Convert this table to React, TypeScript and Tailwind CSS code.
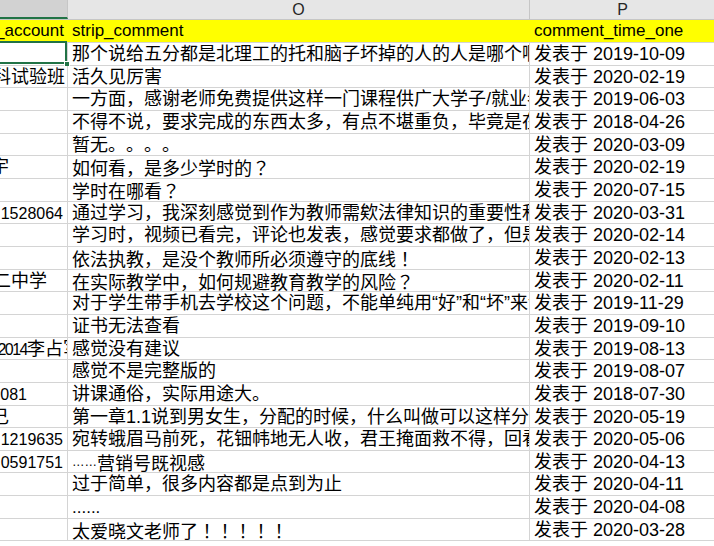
import React from "react"

type NCell = { text: React.ReactNode; cls: string }
type Row = { n?: NCell; o: React.ReactNode; p: string }

// fullwidth ！？ sit centred in the reference, so they come from the JP face
function cjk(s: string) {
  return s.split(/([？！])/).map((part, i) =>
    part === "？" || part === "！" ? (
      <span key={i} className="font-['Noto_Sans_CJK_JP']">{part}</span>
    ) : (
      <React.Fragment key={i}>{part}</React.Fragment>
    )
  )
}

// column N is scrolled off to the left, so each value is right-anchored where it shows
const rows: Row[] = [
  { o: "那个说给五分都是北理工的托和脑子坏掉的人的人是哪个啊", p: "2019-10-09" },
  { n: { text: "理科试验班", cls: "mr-[2px]" }, o: "活久见厉害", p: "2020-02-19" },
  { o: "一方面，感谢老师免费提供这样一门课程供广大学子/就业者学习", p: "2019-06-03" },
  { o: "不得不说，要求完成的东西太多，有点不堪重负，毕竟是在职", p: "2018-04-26" },
  { o: "暂无。。。。", p: "2020-03-09" },
  { n: { text: "文宇", cls: "mr-[58px]" }, o: cjk("如何看，是多少学时的？"), p: "2020-02-19" },
  { o: cjk("学时在哪看？"), p: "2020-07-15" },
  { n: { text: <span className="text-[16px]">1528064</span>, cls: "mr-[4px]" }, o: "通过学习，我深刻感觉到作为教师需欸法律知识的重要性和必要性", p: "2020-03-31" },
  { o: "学习时，视频已看完，评论也发表，感觉要求都做了，但是", p: "2020-02-14" },
  { o: cjk("依法执教，是没个教师所必须遵守的底线！"), p: "2020-02-13" },
  { n: { text: "市第二中学", cls: "mr-[20px]" }, o: cjk("在实际教学中，如何规避教育教学的风险？"), p: "2020-02-11" },
  { o: "对于学生带手机去学校这个问题，不能单纯用“好”和“坏”来评价", p: "2019-11-29" },
  { o: "证书无法查看", p: "2019-09-10" },
  { n: { text: <><span className="text-[16px] tracking-[-1.5px]">2014</span>李占军</>, cls: "-mr-[14px]" }, o: "感觉没有建议", p: "2019-08-13" },
  { o: "感觉不是完整版的", p: "2019-08-07" },
  { n: { text: <span className="text-[16px]">081</span>, cls: "mr-[40px]" }, o: "讲课通俗，实际用途大。", p: "2018-07-30" },
  { n: { text: "自己", cls: "mr-[58px]" }, o: "第一章1.1说到男女生，分配的时候，什么叫做可以这样分配", p: "2020-05-19" },
  { n: { text: <span className="text-[16px]">1219635</span>, cls: "mr-[4px]" }, o: "宛转蛾眉马前死，花钿帏地无人收，君王掩面救不得，回看血泪相和流", p: "2020-05-06" },
  { n: { text: <span className="text-[16px]">0591751</span>, cls: "mr-[4px]" }, o: <><span className="text-[12.5px] align-[4px]">……</span>营销号既视感</>, p: "2020-04-13" },
  { o: "过于简单，很多内容都是点到为止", p: "2020-04-11" },
  { o: <span className="text-[17px]">......</span>, p: "2020-04-08" },
  { o: cjk("太爱晓文老师了！！！！！"), p: "2020-03-28" },
]

function DataRow({ row, selected }: { row: Row; selected?: boolean }) {
  return (
    <div className="relative flex h-[22.67px] border-b border-[#d4d4d4] leading-[22px] text-[18px] whitespace-nowrap">
      <div className="flex w-[68px] shrink-0 justify-end overflow-hidden border-r border-[#d4d4d4]">
        {row.n && <span className={row.n.cls}>{row.n.text}</span>}
      </div>
      <div className="w-[462px] shrink-0 overflow-hidden border-r border-[#d4d4d4] pl-[4px]">{row.o}</div>
      <div className="w-[185px] shrink-0 overflow-hidden pl-[4px]">发表于 {row.p}</div>
      {selected && (
        <>
          <div className="absolute left-[-2px] top-[-2px] h-[23px] w-[69px] border-2 border-[#217346]" />
          <div className="absolute left-[64px] top-[18px] h-[6px] w-[6px] border border-white bg-[#217346]" />
        </>
      )}
    </div>
  )
}

export default function App() {
  return (
    <div className="h-[546px] w-[714px] overflow-hidden bg-white font-['Liberation_Sans','Noto_Sans_CJK_SC',sans-serif] text-black [text-spacing-trim:space-all]">
      {/* column letters */}
      <div className="flex h-[20px] border-b border-[#c6c6c6] bg-[#e6e6e6] text-[16px] leading-[19px] text-[#262626]">
        <div className="w-[68px] shrink-0 border-r border-b-2 border-r-[#c6c6c6] border-b-[#217346] bg-[#d2d2d2]" />
        <div className="flex w-[462px] shrink-0 justify-center border-r border-[#c6c6c6]">O</div>
        <div className="flex w-[185px] shrink-0 justify-center">P</div>
      </div>

      {/* field names */}
      <div className="flex h-[23px] border-b border-[#d4d4d4] bg-[#ffff00] text-[17px] leading-[22px] whitespace-nowrap">
        <div className="flex w-[68px] shrink-0 justify-end overflow-hidden">
          <span className="mr-[4px]">user_account</span>
        </div>
        <div className="w-[462px] shrink-0 pl-[4px]">strip_comment</div>
        <div className="w-[185px] shrink-0 pl-[4px]">comment_time_one</div>
      </div>

      {rows.map((r, i) => (
        <DataRow key={i} row={r} selected={i === 0} />
      ))}
    </div>
  )
}
